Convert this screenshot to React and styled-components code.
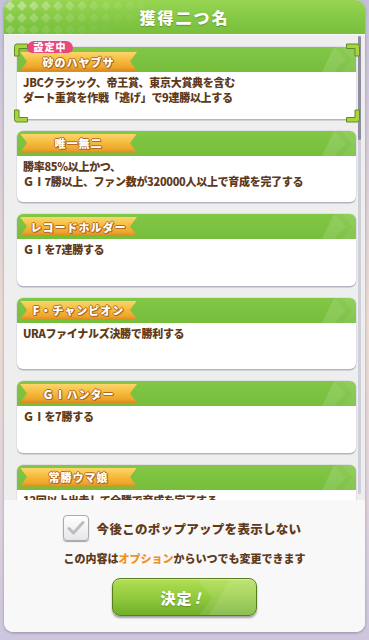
import React from 'react'
import styled, { createGlobalStyle } from 'styled-components'

const GlobalStyle = createGlobalStyle`
  html, body {
    margin: 0;
    padding: 0;
  }
  body {
    font-family: "Noto Sans CJK JP", "Noto Sans", sans-serif;
  }
`

const Stage = styled.div`
  width: 369px;
  height: 640px;
  overflow: hidden;
  box-sizing: border-box;
  padding: 0 4px;
  background: linear-gradient(
    180deg,
    #c4c0dc 0%,
    #d9cdd9 25%,
    #ecdcd2 50%,
    #e2d4dc 75%,
    #cdc6de 100%
  );
`

const Modal = styled.div`
  width: 361px;
  height: 632px;
  border-radius: 9px;
  background: #f8f8f8;
  display: flex;
  flex-direction: column;
  overflow: hidden;
  box-shadow: 0 1px 3px rgba(40, 30, 60, 0.35);
`

const Header = styled.div`
  position: relative;
  flex: none;
  height: 34px;
  border-bottom: 1px solid #fbfbfb;
  display: flex;
  align-items: center;
  justify-content: center;
  background: linear-gradient(180deg, #97d552 0%, #82c744 60%, #78bf3d 100%);
  color: #fff;
  font-size: 16px;
  font-weight: 900;
  letter-spacing: 2px;
  text-shadow: 0 1px 1px rgba(70, 110, 20, 0.55);
`

const HeaderPattern = styled.svg`
  position: absolute;
  left: 0;
  top: 0;
`

const Title = styled.span`
  position: relative;
`

const ListArea = styled.div`
  position: relative;
  flex: none;
  height: 465px;
  box-sizing: border-box;
  padding: 12px 9px 0 13px;
  background: #eeeeef;
  overflow: hidden;
`

const ScrollTrack = styled.div`
  position: absolute;
  right: 4px;
  top: 1px;
  bottom: 6px;
  width: 3px;
  border-radius: 2px;
  background: #cfcfd9;
`

const ScrollThumb = styled.div`
  height: 104px;
  border-radius: 2px;
  background: #8d8d9d;
`

const Card = styled.div`
  position: relative;
  height: 71.5px;
  margin-bottom: 12px;
  border-radius: 6px;
  background: #fff;
  display: flex;
  flex-direction: column;
  box-shadow: 0 1.5px 0 #b4b4c2, 0 0 0 0.5px #d2d2da;
`

const CardBar = styled.div`
  position: relative;
  flex: none;
  height: 25px;
  padding-left: 3px;
  border-radius: 6px 6px 0 0;
  display: flex;
  align-items: center;
  background: linear-gradient(180deg, #82c746 0%, #76be3c 100%);
  overflow: hidden;
`

const BarShine = styled.svg`
  position: absolute;
  right: 0;
  top: 0;
`

const Ribbon = styled.div`
  position: relative;
  width: 117px;
  height: 19px;
  margin-top: ${(p) => (p.lowered ? '4px' : '0')};
  display: flex;
  align-items: center;
  justify-content: center;
  clip-path: polygon(0 0, 100% 0, calc(100% - 7px) 50%, 100% 100%, 0 100%, 7px 50%);
  background: linear-gradient(180deg, #fbd66c 0%, #f5bb3c 45%, #eea52c 80%, #d98a1e 100%);
  color: #fff;
  font-size: 11px;
  font-weight: 900;
  letter-spacing: 1px;
  text-shadow: 1px 0 0 #b06a22, -1px 0 0 #b06a22, 0 1px 0 #b06a22, 0 -1px 0 #b06a22,
    1px 1px 0 #b06a22;
`

const CardBody = styled.div`
  padding: 3px 6px;
  font-size: 11px;
  line-height: 15px;
  font-weight: 900;
  letter-spacing: -0.3px;
  color: #5e3a1b;
  white-space: pre-line;
`

const Badge = styled.div`
  position: absolute;
  left: 10px;
  top: -6px;
  z-index: 2;
  width: 46px;
  height: 12px;
  border-radius: 7px 7px 5px 5px;
  display: flex;
  align-items: center;
  justify-content: center;
  background: #e8487e;
  color: #fff;
  font-size: 10px;
  font-weight: 900;
  line-height: 1;
  letter-spacing: 1px;
`

const Bracket = styled.svg`
  position: absolute;
  z-index: 3;
  ${(p) => (p.corner.includes('t') ? 'top: -4px;' : 'bottom: -4px;')}
  ${(p) => (p.corner.includes('l') ? 'left: -4px;' : 'right: -5px;')}
  transform: ${(p) =>
    ({ tl: 'none', tr: 'scaleX(-1)', bl: 'scaleY(-1)', br: 'scale(-1, -1)' })[p.corner]};
`

const BottomPanel = styled.div`
  flex: 1;
  display: flex;
  flex-direction: column;
  align-items: center;
  padding-top: 15px;
  background: #f8f8f8;
`

const CheckRow = styled.div`
  display: flex;
  align-items: center;
  gap: 8px;
  margin-right: 5px;
`

const CheckBox = styled.div`
  width: 24px;
  height: 24px;
  border-radius: 4px;
  border: 1px solid #aaaab0;
  background: linear-gradient(180deg, #ffffff 0%, #e6e6e8 100%);
  box-shadow: 0 1px 1px rgba(0, 0, 0, 0.35);
  display: flex;
  align-items: center;
  justify-content: center;
`

const CheckLabel = styled.span`
  font-size: 12.5px;
  font-weight: 900;
  color: #5e3a1b;
  letter-spacing: 0.3px;
`

const Notice = styled.div`
  margin-top: 10px;
  font-size: 11px;
  line-height: 15px;
  font-weight: 900;
  color: #5e3a1b;
`

const Accent = styled.span`
  color: #f0901e;
`

const ConfirmButton = styled.button`
  position: relative;
  margin-top: 12px;
  width: 145px;
  height: 38px;
  padding: 0;
  border-radius: 8px;
  border: 1px solid #567f1b;
  background: linear-gradient(180deg, #b2de52 0%, #92cb3e 50%, #70b02a 100%);
  box-shadow: 0 2px 2px rgba(0, 0, 0, 0.35), inset 0 1px 0 rgba(255, 255, 255, 0.35);
  overflow: hidden;
  color: #fff;
  font-family: inherit;
  font-size: 15px;
  font-weight: 900;
  letter-spacing: 1px;
  text-shadow: 0 1px 1px rgba(60, 100, 20, 0.5);
`

const ButtonShine = styled.svg`
  position: absolute;
  right: 0;
  top: 0;
`

const ButtonText = styled.span`
  position: relative;
  margin-right: 6px;
`

const Bang = styled.span`
  display: inline-block;
  margin-left: 3px;
  transform: skewX(-15deg);
`

const titles = [
  {
    name: '砂のハヤブサ',
    text: 'JBCクラシック、帝王賞、東京大賞典を含む\nダート重賞を作戦「逃げ」で9連勝以上する',
    active: true,
  },
  {
    name: '唯一無二',
    text: '勝率85%以上かつ、\nＧⅠ7勝以上、ファン数が320000人以上で育成を完了する',
  },
  { name: 'レコードホルダー', text: 'ＧⅠを7連勝する' },
  { name: 'F・チャンピオン', text: 'URAファイナルズ決勝で勝利する' },
  { name: 'ＧⅠハンター', text: 'ＧⅠを7勝する' },
  { name: '常勝ウマ娘', text: '12回以上出走して全勝で育成を完了する' },
]

function Corner({ corner }) {
  return (
    <Bracket corner={corner} width="16" height="14" viewBox="0 0 16 14">
      <path
        d="M1.5 3.5 Q1.5 1 4 1 L14.5 1 L14.5 5.5 L6 5.5 L6 13 L1.5 13 Z"
        fill="#aad43e"
        stroke="#5f8c22"
        strokeWidth="1"
        strokeLinejoin="round"
      />
    </Bracket>
  )
}

function TitleCard({ item }) {
  return (
    <Card>
      {item.active && (
        <>
          <Badge>設定中</Badge>
          <Corner corner="tl" />
          <Corner corner="tr" />
          <Corner corner="bl" />
          <Corner corner="br" />
        </>
      )}
      <CardBar>
        <BarShine width="44" height="25" viewBox="0 0 44 25">
          <polygon points="10,25 22,0 44,0 44,25" fill="rgba(255,255,255,0.07)" />
          <polygon points="22,0 34,12.5 22,25 10,25" fill="rgba(255,255,255,0.07)" />
          <polygon points="30,0 44,0 44,25 30,25 40,12.5" fill="rgba(255,255,255,0.06)" />
        </BarShine>
        <Ribbon lowered={item.active}>{item.name}</Ribbon>
      </CardBar>
      <CardBody>{item.text}</CardBody>
    </Card>
  )
}

export default function App() {
  return (
    <Stage>
      <GlobalStyle />
      <Modal>
        <Header>
          <HeaderPattern width="140" height="34" viewBox="0 0 140 34">
            <defs>
              <pattern id="dia" width="12" height="12" patternUnits="userSpaceOnUse">
                <polygon points="6,1 11,6 6,11 1,6" fill="#ffffff" />
              </pattern>
              <linearGradient id="fade" x1="0" y1="0" x2="1" y2="0.6">
                <stop offset="0" stopColor="#fff" stopOpacity="0.45" />
                <stop offset="0.55" stopColor="#fff" stopOpacity="0.12" />
                <stop offset="1" stopColor="#fff" stopOpacity="0" />
              </linearGradient>
              <mask id="fadeMask">
                <rect width="140" height="34" fill="url(#fade)" />
              </mask>
            </defs>
            <rect width="140" height="34" fill="url(#dia)" mask="url(#fadeMask)" />
          </HeaderPattern>
          <Title>獲得二つ名</Title>
        </Header>
        <ListArea>
          {titles.map((item, i) => (
            <TitleCard key={i} item={item} />
          ))}
          <ScrollTrack>
            <ScrollThumb />
          </ScrollTrack>
        </ListArea>
        <BottomPanel>
          <CheckRow>
            <CheckBox>
              <svg width="18" height="16" viewBox="0 0 18 16">
                <path
                  d="M2 8.5 L6.5 13 L16 2.5"
                  fill="none"
                  stroke="#bdbdc1"
                  strokeWidth="3"
                  strokeLinecap="round"
                  strokeLinejoin="round"
                />
              </svg>
            </CheckBox>
            <CheckLabel>今後このポップアップを表示しない</CheckLabel>
          </CheckRow>
          <Notice>
            この内容は<Accent>オプション</Accent>からいつでも変更できます
          </Notice>
          <ConfirmButton>
            <ButtonShine width="60" height="38" viewBox="0 0 60 38">
              <polygon points="2,0 60,0 60,38 2,38 16,19" fill="rgba(255,255,255,0.10)" />
              <polygon points="34,0 60,0 60,38 12,38" fill="rgba(255,255,255,0.10)" />
            </ButtonShine>
            <ButtonText>
              決定<Bang>!</Bang>
            </ButtonText>
          </ConfirmButton>
        </BottomPanel>
      </Modal>
    </Stage>
  )
}
